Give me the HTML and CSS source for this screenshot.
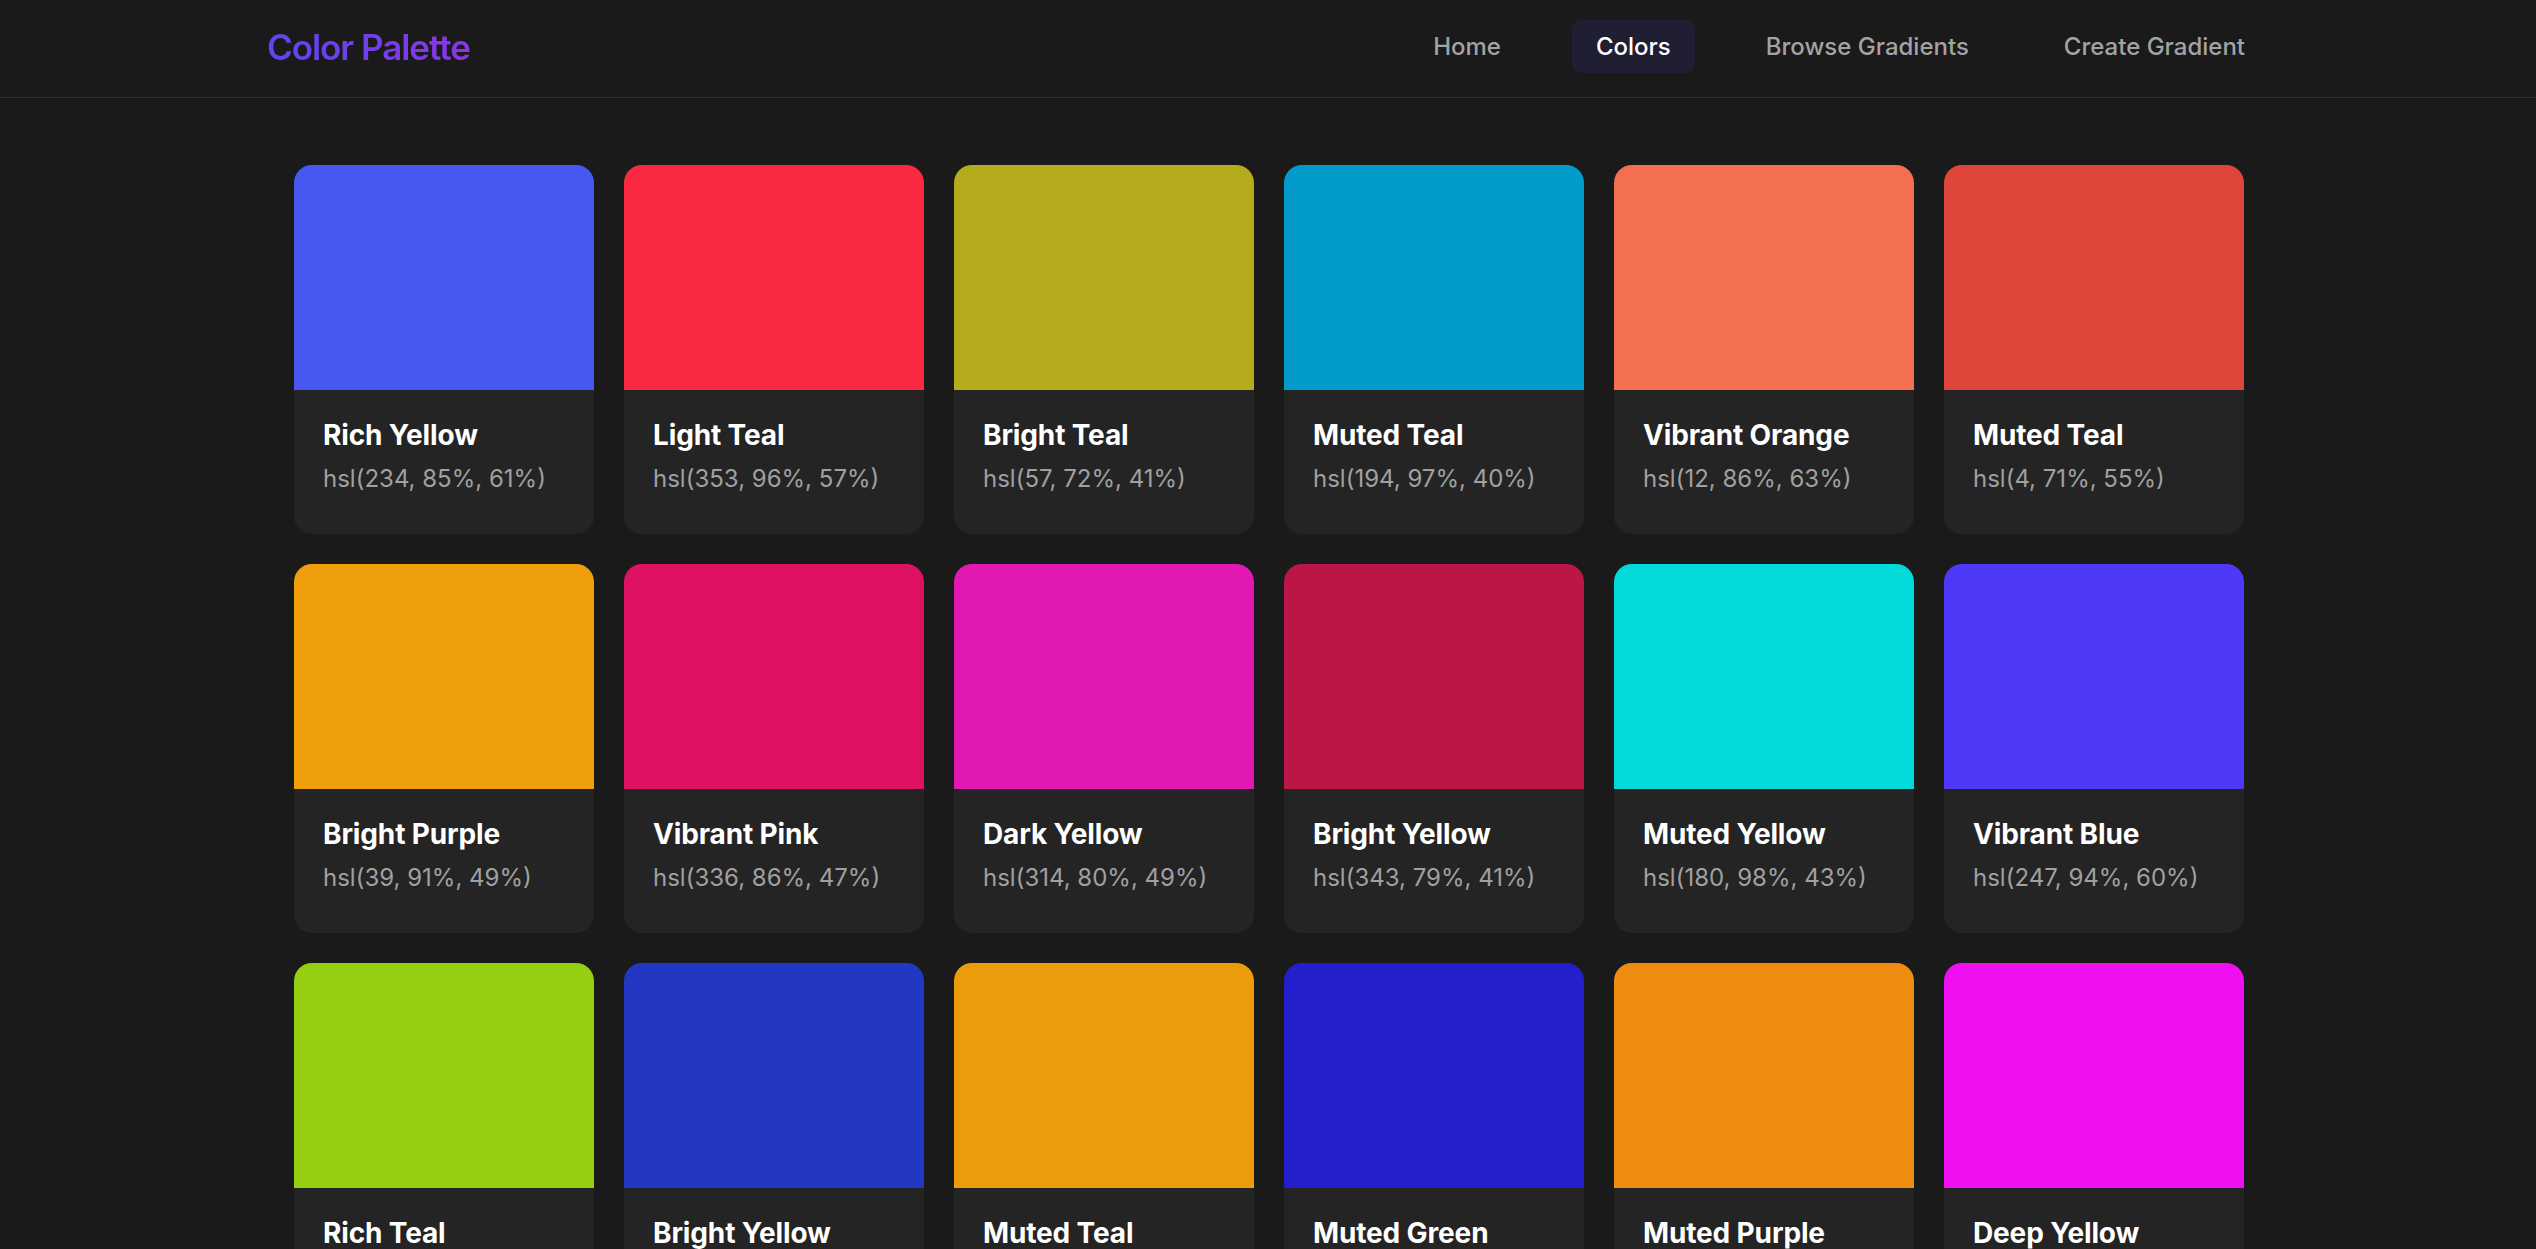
FILE: index.html
```html
<!DOCTYPE html>
<html lang="en">
<head>
<meta charset="utf-8">
<title>Color Palette</title>
<link rel="stylesheet" href="styles.css">
</head>
<body>
<header class="site-header">
  <div class="header-inner">
    <a class="logo" href="#">Color Palette</a>
    <nav class="nav">
      <a class="nav-link" href="#">Home</a>
      <a class="nav-link active" href="#">Colors</a>
      <a class="nav-link" href="#">Browse Gradients</a>
      <a class="nav-link" href="#">Create Gradient</a>
    </nav>
  </div>
</header>
<main class="main">
  <div class="grid">
    <div class="card"><div class="swatch" style="background:hsl(234,85%,61%)"></div><div class="info"><div class="name">Rich Yellow</div><div class="value">hsl(234, 85%, 61%)</div></div></div>
    <div class="card"><div class="swatch" style="background:hsl(353,96%,57%)"></div><div class="info"><div class="name">Light Teal</div><div class="value">hsl(353, 96%, 57%)</div></div></div>
    <div class="card"><div class="swatch" style="background:hsl(57,72%,41%)"></div><div class="info"><div class="name">Bright Teal</div><div class="value">hsl(57, 72%, 41%)</div></div></div>
    <div class="card"><div class="swatch" style="background:hsl(194,97%,40%)"></div><div class="info"><div class="name">Muted Teal</div><div class="value">hsl(194, 97%, 40%)</div></div></div>
    <div class="card"><div class="swatch" style="background:hsl(12,86%,63%)"></div><div class="info"><div class="name">Vibrant Orange</div><div class="value">hsl(12, 86%, 63%)</div></div></div>
    <div class="card"><div class="swatch" style="background:hsl(4,71%,55%)"></div><div class="info"><div class="name">Muted Teal</div><div class="value">hsl(4, 71%, 55%)</div></div></div>

    <div class="card"><div class="swatch" style="background:hsl(39,91%,49%)"></div><div class="info"><div class="name">Bright Purple</div><div class="value">hsl(39, 91%, 49%)</div></div></div>
    <div class="card"><div class="swatch" style="background:hsl(336,86%,47%)"></div><div class="info"><div class="name">Vibrant Pink</div><div class="value">hsl(336, 86%, 47%)</div></div></div>
    <div class="card"><div class="swatch" style="background:hsl(314,80%,49%)"></div><div class="info"><div class="name">Dark Yellow</div><div class="value">hsl(314, 80%, 49%)</div></div></div>
    <div class="card"><div class="swatch" style="background:hsl(343,79%,41%)"></div><div class="info"><div class="name">Bright Yellow</div><div class="value">hsl(343, 79%, 41%)</div></div></div>
    <div class="card"><div class="swatch" style="background:hsl(180,98%,43%)"></div><div class="info"><div class="name">Muted Yellow</div><div class="value">hsl(180, 98%, 43%)</div></div></div>
    <div class="card"><div class="swatch" style="background:hsl(247,94%,60%)"></div><div class="info"><div class="name">Vibrant Blue</div><div class="value">hsl(247, 94%, 60%)</div></div></div>

    <div class="card"><div class="swatch" style="background:hsl(78,84%,44%)"></div><div class="info"><div class="name">Rich Teal</div><div class="value">hsl(78, 84%, 44%)</div></div></div>
    <div class="card"><div class="swatch" style="background:hsl(232,70%,45%)"></div><div class="info"><div class="name">Bright Yellow</div><div class="value">hsl(232, 70%, 45%)</div></div></div>
    <div class="card"><div class="swatch" style="background:hsl(39,91%,48%)"></div><div class="info"><div class="name">Muted Teal</div><div class="value">hsl(39, 91%, 48%)</div></div></div>
    <div class="card"><div class="swatch" style="background:hsl(242,74%,46%)"></div><div class="info"><div class="name">Muted Green</div><div class="value">hsl(242, 74%, 46%)</div></div></div>
    <div class="card"><div class="swatch" style="background:hsl(33,87%,50%)"></div><div class="info"><div class="name">Muted Purple</div><div class="value">hsl(33, 87%, 50%)</div></div></div>
    <div class="card"><div class="swatch" style="background:hsl(300,88%,50%)"></div><div class="info"><div class="name">Deep Yellow</div><div class="value">hsl(300, 88%, 50%)</div></div></div>
  </div>
</main>
</body>
</html>
```
FILE: styles.css
```css
* { box-sizing: border-box; }
html, body { margin: 0; padding: 0; }
body {
  background: #1a1a1a;
  color: #ffffff;
  font-family: Inter, "Noto Sans", "Liberation Sans", sans-serif;
}
a { text-decoration: none; }

.site-header {
  border-bottom: 1px solid #2f2f2f;
}
.header-inner {
  width: 2002px;
  margin: 0 auto;
  padding: 20px 0 24px;
  display: flex;
  align-items: center;
  justify-content: space-between;
}
.logo {
  font-size: 35px;
  font-weight: 600;
  letter-spacing: -0.03em;
  line-height: 44px;
  background: linear-gradient(90deg, #5b47f0 0%, #8b35e6 100%);
  -webkit-background-clip: text;
  background-clip: text;
  color: transparent;
}
.nav {
  display: flex;
  gap: 47px;
  align-items: center;
}
.nav-link {
  font-size: 24px;
  font-weight: 500;
  color: #a3a3a3;
  padding: 12px 24px;
  border-radius: 9px;
  line-height: 29px;
}
.nav-link.active {
  background: #1f1e33;
  color: #ffffff;
}

.main {
  width: 2002px;
  margin: 0 auto;
  padding-top: 67px;
}
.grid {
  margin-left: 27px;
  display: grid;
  grid-template-columns: repeat(6, 300px);
  gap: 30px;
}
.card {
  background: #242424;
  border-radius: 18px;
  overflow: hidden;
  height: 369px;
}
.swatch {
  height: 225px;
}
.info {
  padding: 25px 29px;
}
.name {
  font-size: 28px;
  font-weight: 700;
  line-height: 40px;
  letter-spacing: -0.005em;
}
.value {
  margin-top: 6px;
  font-size: 24px;
  line-height: 36px;
  color: #a0a0a0;
}
```
